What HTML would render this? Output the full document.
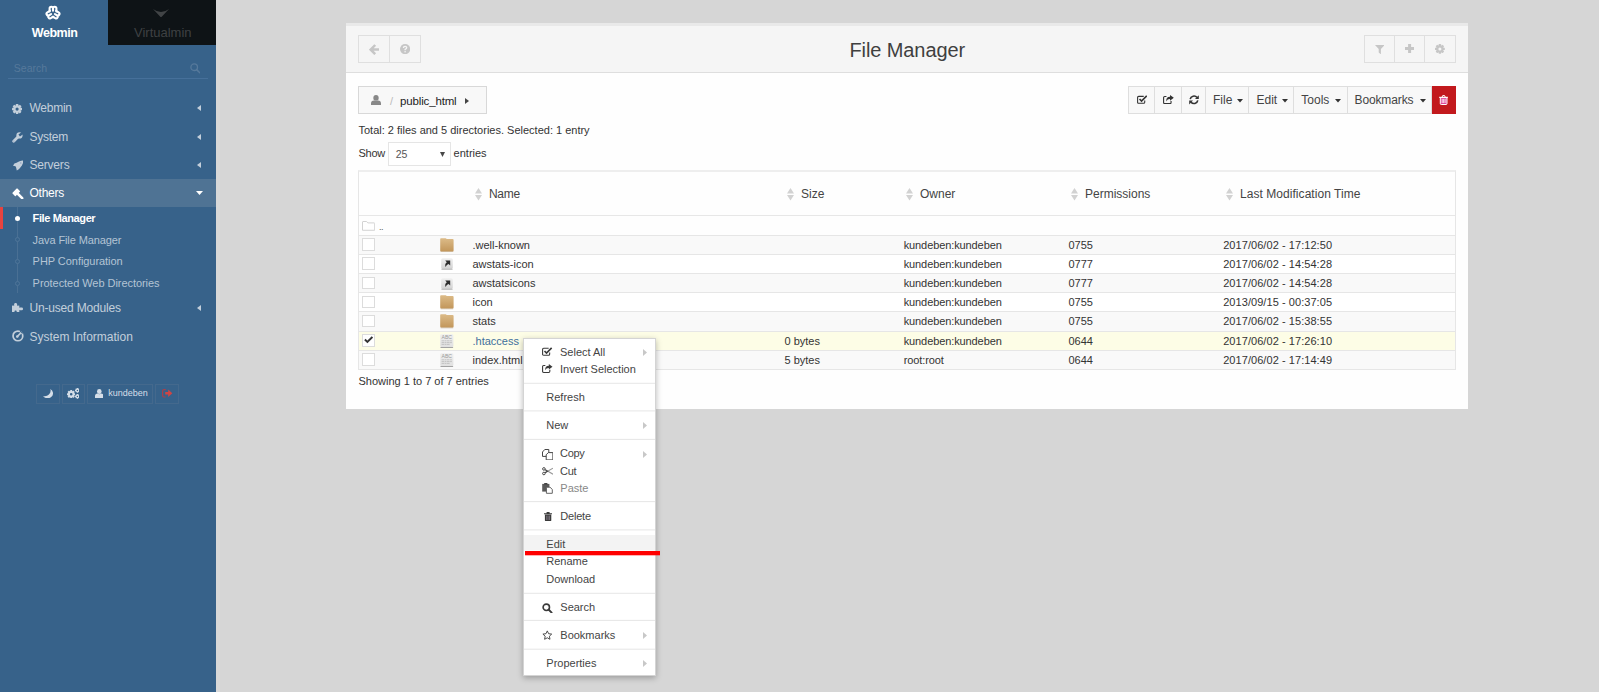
<!DOCTYPE html>
<html><head><meta charset="utf-8"><title>File Manager</title>
<style>
html,body{margin:0;padding:0;}
body{width:1599px;height:692px;overflow:hidden;background:#d6d6d6;font-family:"Liberation Sans", sans-serif;position:relative;}
.t{position:absolute;white-space:nowrap;}
.b{position:absolute;box-sizing:border-box;}
</style></head><body>
<div class="b" style="left:0px;top:0px;width:216px;height:692px;background:#37628a;"></div>
<div class="b" style="left:216px;top:0px;width:4px;height:692px;background:#d9d9d9;"></div>
<div class="b" style="left:108px;top:0px;width:108px;height:45px;background:#0e1316;"></div>
<span class="t" style="left:31.8px;top:27px;font-size:12.5px;line-height:12.5px;color:#fff;font-weight:700;letter-spacing:-0.45px;">Webmin</span>
<span class="t" style="left:134px;top:26px;font-size:13px;line-height:13px;color:#3e4143;">Virtualmin</span>
<span class="t" style="left:13.8px;top:63px;font-size:10.5px;line-height:10.5px;color:#56799b;">Search</span>
<div class="b" style="left:8px;top:78px;width:200px;height:1px;background:#46709a;"></div>
<div class="b" style="left:0px;top:179px;width:216px;height:28px;background:#4f7394;"></div>
<span class="t" style="left:29.5px;top:102px;font-size:12px;line-height:12px;color:#c3cfdb;letter-spacing:-0.25px;">Webmin</span>
<svg class="b" style="left:196.5px;top:105.4px;" width="4" height="6" viewBox="0 0 4 6"><path d="M4 0 L0 3 L4 6Z" fill="#c3cfdb"/></svg>
<span class="t" style="left:29.5px;top:131px;font-size:12px;line-height:12px;color:#c3cfdb;letter-spacing:-0.25px;">System</span>
<svg class="b" style="left:196.5px;top:134.4px;" width="4" height="6" viewBox="0 0 4 6"><path d="M4 0 L0 3 L4 6Z" fill="#c3cfdb"/></svg>
<span class="t" style="left:29.5px;top:159px;font-size:12px;line-height:12px;color:#c3cfdb;letter-spacing:-0.2px;">Servers</span>
<svg class="b" style="left:196.5px;top:162.4px;" width="4" height="6" viewBox="0 0 4 6"><path d="M4 0 L0 3 L4 6Z" fill="#c3cfdb"/></svg>
<span class="t" style="left:29.5px;top:187px;font-size:12px;line-height:12px;color:#fff;letter-spacing:-0.25px;">Others</span>
<svg class="b" style="left:195.5px;top:191px;" width="7" height="4" viewBox="0 0 7 4"><path d="M0 0 L7 0 L3.5 4Z" fill="#fff"/></svg>
<span class="t" style="left:29.5px;top:302px;font-size:12px;line-height:12px;color:#c3cfdb;letter-spacing:-0.18px;">Un-used Modules</span>
<svg class="b" style="left:196.5px;top:305.4px;" width="4" height="6" viewBox="0 0 4 6"><path d="M4 0 L0 3 L4 6Z" fill="#c3cfdb"/></svg>
<span class="t" style="left:29.5px;top:331px;font-size:12px;line-height:12px;color:#c3cfdb;">System Information</span>
<div class="b" style="left:17px;top:207px;width:1px;height:86px;background:#4a7094;"></div>
<div class="b" style="left:0px;top:207px;width:3px;height:22px;background:#e8433f;"></div>
<span class="t" style="left:32.6px;top:213px;font-size:11px;line-height:11px;color:#fff;font-weight:700;letter-spacing:-0.38px;">File Manager</span>
<span class="t" style="left:32.6px;top:235px;font-size:11px;line-height:11px;color:#b4c4d4;letter-spacing:-0.1px;">Java File Manager</span>
<span class="t" style="left:32.6px;top:256px;font-size:11px;line-height:11px;color:#b4c4d4;letter-spacing:-0.05px;">PHP Configuration</span>
<span class="t" style="left:32.6px;top:278px;font-size:11px;line-height:11px;color:#b4c4d4;letter-spacing:-0.05px;">Protected Web Directories</span>
<div class="b" style="left:14.8px;top:215.8px;width:5px;height:5px;background:#fff;border-radius:50%;"></div>
<div class="b" style="left:14.8px;top:237.2px;width:5px;height:5px;background:#37628a;border:1px solid #4f7599;border-radius:50%;"></div>
<div class="b" style="left:14.8px;top:258.8px;width:5px;height:5px;background:#37628a;border:1px solid #4f7599;border-radius:50%;"></div>
<div class="b" style="left:14.8px;top:280.5px;width:5px;height:5px;background:#37628a;border:1px solid #4f7599;border-radius:50%;"></div>
<div class="b" style="left:36px;top:384px;width:24px;height:19.5px;border:1px solid #44698d;"></div>
<div class="b" style="left:62px;top:384px;width:23px;height:19.5px;border:1px solid #44698d;"></div>
<div class="b" style="left:86.5px;top:384px;width:66.5px;height:19.5px;border:1px solid #44698d;"></div>
<div class="b" style="left:155px;top:384px;width:24px;height:19.5px;border:1px solid #44698d;"></div>
<span class="t" style="left:108.3px;top:389px;font-size:9px;line-height:9px;color:#d5dee8;">kundeben</span>
<div class="b" style="left:345.7px;top:22.8px;width:1122.5px;height:386.2px;background:#fefefe;"></div>
<div class="b" style="left:345.7px;top:22.8px;width:1122.5px;height:50.6px;background:#f5f5f5;border-bottom:1.5px solid #dedede;border-top:3.6px solid #e9e9e9;"></div>
<span class="t" style="left:849.5px;top:40px;font-size:20px;line-height:20px;color:#3f3f3f;letter-spacing:-0.1px;">File Manager</span>
<div class="b" style="left:358px;top:35px;width:63px;height:28px;background:#f5f5f5;border:1px solid #dfdfdf;"></div>
<div class="b" style="left:389px;top:35px;width:1px;height:28px;background:#dfdfdf;"></div>
<div class="b" style="left:1364px;top:35px;width:92px;height:28px;background:#f5f5f5;border:1px solid #dfdfdf;"></div>
<div class="b" style="left:1394px;top:35px;width:1px;height:28px;background:#dfdfdf;"></div>
<div class="b" style="left:1424px;top:35px;width:1px;height:28px;background:#dfdfdf;"></div>
<div class="b" style="left:358px;top:86px;width:129px;height:28px;background:#f8f8f8;border:1px solid #d8d8d8;"></div>
<span class="t" style="left:390px;top:96px;font-size:11px;line-height:11px;color:#bbb;">/</span>
<span class="t" style="left:400px;top:96px;font-size:11.5px;line-height:11.5px;color:#222;letter-spacing:-0.15px;">public_html</span>
<svg class="b" style="left:465px;top:97.5px;" width="4" height="6" viewBox="0 0 4 6"><path d="M0 0 L4 3 L0 6Z" fill="#444"/></svg>
<div class="b" style="left:1128px;top:86px;width:304px;height:28px;background:#f8f8f8;border:1px solid #dedede;"></div>
<div class="b" style="left:1154px;top:86px;width:1px;height:28px;background:#dedede;"></div>
<div class="b" style="left:1181px;top:86px;width:1px;height:28px;background:#dedede;"></div>
<div class="b" style="left:1205px;top:86px;width:1px;height:28px;background:#dedede;"></div>
<div class="b" style="left:1248px;top:86px;width:1px;height:28px;background:#dedede;"></div>
<div class="b" style="left:1293px;top:86px;width:1px;height:28px;background:#dedede;"></div>
<div class="b" style="left:1347px;top:86px;width:1px;height:28px;background:#dedede;"></div>
<div class="b" style="left:1432px;top:86px;width:24px;height:28px;background:#c2191d;"></div>
<span class="t" style="left:1213px;top:94px;font-size:12px;line-height:12px;color:#444;">File</span>
<svg class="b" style="left:1237px;top:99px;" width="6" height="3.5" viewBox="0 0 6 3.5"><path d="M0 0 L6 0 L3 3.5Z" fill="#333"/></svg>
<span class="t" style="left:1256.5px;top:94px;font-size:12px;line-height:12px;color:#444;">Edit</span>
<svg class="b" style="left:1282px;top:99px;" width="6" height="3.5" viewBox="0 0 6 3.5"><path d="M0 0 L6 0 L3 3.5Z" fill="#333"/></svg>
<span class="t" style="left:1301.3px;top:94px;font-size:12px;line-height:12px;color:#444;">Tools</span>
<svg class="b" style="left:1335.3px;top:99px;" width="6" height="3.5" viewBox="0 0 6 3.5"><path d="M0 0 L6 0 L3 3.5Z" fill="#333"/></svg>
<span class="t" style="left:1354.5px;top:94px;font-size:12px;line-height:12px;color:#444;letter-spacing:-0.12px;">Bookmarks</span>
<svg class="b" style="left:1419.5px;top:99px;" width="6" height="3.5" viewBox="0 0 6 3.5"><path d="M0 0 L6 0 L3 3.5Z" fill="#333"/></svg>
<span class="t" style="left:358.5px;top:125px;font-size:11px;line-height:11px;color:#333;">Total: 2 files and 5 directories. Selected: 1 entry</span>
<span class="t" style="left:358.5px;top:148px;font-size:11px;line-height:11px;color:#333;letter-spacing:-0.25px;">Show</span>
<div class="b" style="left:388px;top:142.2px;width:62.6px;height:23.4px;background:#fff;border:1px solid #e5e5e5;"></div>
<span class="t" style="left:395.7px;top:149px;font-size:10.5px;line-height:10.5px;color:#555;">25</span>
<svg class="b" style="left:440px;top:151.5px;" width="5" height="5" viewBox="0 0 5 5"><path d="M0 0 L5 0 L2.5 5Z" fill="#484848"/></svg>
<span class="t" style="left:453.6px;top:148px;font-size:11px;line-height:11px;color:#333;">entries</span>
<div class="b" style="left:358px;top:169.6px;width:1098px;height:200px;border:1px solid #e6e6e6;border-top:2px solid #eeeeee;"></div>
<div class="b" style="left:359px;top:215.4px;width:1096px;height:1px;background:#e7e7e7;"></div>
<div class="b" style="left:359px;top:234.8px;width:1096px;height:19.099999999999994px;background:#f9f9f9;border-top:1px solid #e6e6e6;"></div>
<div class="b" style="left:359px;top:253.9px;width:1096px;height:19.200000000000017px;background:#ffffff;border-top:1px solid #e6e6e6;"></div>
<div class="b" style="left:359px;top:273.1px;width:1096px;height:19.19999999999999px;background:#f9f9f9;border-top:1px solid #e6e6e6;"></div>
<div class="b" style="left:359px;top:292.3px;width:1096px;height:19.0px;background:#ffffff;border-top:1px solid #e6e6e6;"></div>
<div class="b" style="left:359px;top:311.3px;width:1096px;height:19.30000000000001px;background:#f9f9f9;border-top:1px solid #e6e6e6;"></div>
<div class="b" style="left:359px;top:330.6px;width:1096px;height:19.0px;background:#fdfde6;border-top:1px solid #e6e6e6;"></div>
<div class="b" style="left:359px;top:349.6px;width:1096px;height:19.19999999999999px;background:#f9f9f9;border-top:1px solid #e6e6e6;"></div>
<svg class="b" style="left:475px;top:188px;" width="7" height="12.5" viewBox="0 0 7 12.5"><path d="M3.5 0 L7 5.5 L0 5.5Z M0 7 L7 7 L3.5 12.5Z" fill="#d2d2d2"/></svg>
<span class="t" style="left:489px;top:188px;font-size:12px;line-height:12px;color:#444;letter-spacing:-0.3px;">Name</span>
<svg class="b" style="left:787px;top:188px;" width="7" height="12.5" viewBox="0 0 7 12.5"><path d="M3.5 0 L7 5.5 L0 5.5Z M0 7 L7 7 L3.5 12.5Z" fill="#d2d2d2"/></svg>
<span class="t" style="left:801px;top:188px;font-size:12px;line-height:12px;color:#444;">Size</span>
<svg class="b" style="left:906px;top:188px;" width="7" height="12.5" viewBox="0 0 7 12.5"><path d="M3.5 0 L7 5.5 L0 5.5Z M0 7 L7 7 L3.5 12.5Z" fill="#d2d2d2"/></svg>
<span class="t" style="left:920px;top:188px;font-size:12px;line-height:12px;color:#444;">Owner</span>
<svg class="b" style="left:1071px;top:188px;" width="7" height="12.5" viewBox="0 0 7 12.5"><path d="M3.5 0 L7 5.5 L0 5.5Z M0 7 L7 7 L3.5 12.5Z" fill="#d2d2d2"/></svg>
<span class="t" style="left:1085px;top:188px;font-size:12px;line-height:12px;color:#444;">Permissions</span>
<svg class="b" style="left:1226px;top:188px;" width="7" height="12.5" viewBox="0 0 7 12.5"><path d="M3.5 0 L7 5.5 L0 5.5Z M0 7 L7 7 L3.5 12.5Z" fill="#d2d2d2"/></svg>
<span class="t" style="left:1240px;top:188px;font-size:12px;line-height:12px;color:#444;letter-spacing:0.05px;">Last Modification Time</span>
<span class="t" style="left:379px;top:223px;font-size:9px;line-height:9px;color:#555;letter-spacing:-0.4px;">..</span>
<span class="t" style="left:472.5px;top:240px;font-size:11px;line-height:11px;color:#333;">.well-known</span>
<span class="t" style="left:903.7px;top:240px;font-size:11px;line-height:11px;color:#333;letter-spacing:-0.1px;">kundeben:kundeben</span>
<span class="t" style="left:1068.5px;top:240px;font-size:11px;line-height:11px;color:#333;">0755</span>
<span class="t" style="left:1223.2px;top:240px;font-size:11px;line-height:11px;color:#333;letter-spacing:0.06px;">2017/06/02 - 17:12:50</span>
<div class="b" style="left:362px;top:238.3px;width:12.6px;height:12.7px;background:#fff;border:1px solid #dcdcdc;"></div>
<span class="t" style="left:472.5px;top:259px;font-size:11px;line-height:11px;color:#333;">awstats-icon</span>
<span class="t" style="left:903.7px;top:259px;font-size:11px;line-height:11px;color:#333;letter-spacing:-0.1px;">kundeben:kundeben</span>
<span class="t" style="left:1068.5px;top:259px;font-size:11px;line-height:11px;color:#333;">0777</span>
<span class="t" style="left:1223.2px;top:259px;font-size:11px;line-height:11px;color:#333;letter-spacing:0.06px;">2017/06/02 - 14:54:28</span>
<div class="b" style="left:362px;top:257.4px;width:12.6px;height:12.7px;background:#fff;border:1px solid #dcdcdc;"></div>
<span class="t" style="left:472.5px;top:278px;font-size:11px;line-height:11px;color:#333;">awstatsicons</span>
<span class="t" style="left:903.7px;top:278px;font-size:11px;line-height:11px;color:#333;letter-spacing:-0.1px;">kundeben:kundeben</span>
<span class="t" style="left:1068.5px;top:278px;font-size:11px;line-height:11px;color:#333;">0777</span>
<span class="t" style="left:1223.2px;top:278px;font-size:11px;line-height:11px;color:#333;letter-spacing:0.06px;">2017/06/02 - 14:54:28</span>
<div class="b" style="left:362px;top:276.6px;width:12.6px;height:12.7px;background:#fff;border:1px solid #dcdcdc;"></div>
<span class="t" style="left:472.5px;top:297px;font-size:11px;line-height:11px;color:#333;">icon</span>
<span class="t" style="left:903.7px;top:297px;font-size:11px;line-height:11px;color:#333;letter-spacing:-0.1px;">kundeben:kundeben</span>
<span class="t" style="left:1068.5px;top:297px;font-size:11px;line-height:11px;color:#333;">0755</span>
<span class="t" style="left:1223.2px;top:297px;font-size:11px;line-height:11px;color:#333;letter-spacing:0.06px;">2013/09/15 - 00:37:05</span>
<div class="b" style="left:362px;top:295.8px;width:12.6px;height:12.7px;background:#fff;border:1px solid #dcdcdc;"></div>
<span class="t" style="left:472.5px;top:316px;font-size:11px;line-height:11px;color:#333;">stats</span>
<span class="t" style="left:903.7px;top:316px;font-size:11px;line-height:11px;color:#333;letter-spacing:-0.1px;">kundeben:kundeben</span>
<span class="t" style="left:1068.5px;top:316px;font-size:11px;line-height:11px;color:#333;">0755</span>
<span class="t" style="left:1223.2px;top:316px;font-size:11px;line-height:11px;color:#333;letter-spacing:0.06px;">2017/06/02 - 15:38:55</span>
<div class="b" style="left:362px;top:314.8px;width:12.6px;height:12.7px;background:#fff;border:1px solid #dcdcdc;"></div>
<span class="t" style="left:472.5px;top:336px;font-size:11px;line-height:11px;color:#3d6f9c;">.htaccess</span>
<span class="t" style="left:784.5px;top:336px;font-size:11px;line-height:11px;color:#333;">0 bytes</span>
<span class="t" style="left:903.7px;top:336px;font-size:11px;line-height:11px;color:#333;letter-spacing:-0.1px;">kundeben:kundeben</span>
<span class="t" style="left:1068.5px;top:336px;font-size:11px;line-height:11px;color:#333;">0644</span>
<span class="t" style="left:1223.2px;top:336px;font-size:11px;line-height:11px;color:#333;letter-spacing:0.06px;">2017/06/02 - 17:26:10</span>
<div class="b" style="left:362px;top:334.1px;width:12.6px;height:12.7px;background:#fff;border:1px solid #dcdcdc;"></div>
<span class="t" style="left:472.5px;top:355px;font-size:11px;line-height:11px;color:#333;">index.html</span>
<span class="t" style="left:784.5px;top:355px;font-size:11px;line-height:11px;color:#333;">5 bytes</span>
<span class="t" style="left:903.7px;top:355px;font-size:11px;line-height:11px;color:#333;letter-spacing:-0.1px;">root:root</span>
<span class="t" style="left:1068.5px;top:355px;font-size:11px;line-height:11px;color:#333;">0644</span>
<span class="t" style="left:1223.2px;top:355px;font-size:11px;line-height:11px;color:#333;letter-spacing:0.06px;">2017/06/02 - 17:14:49</span>
<div class="b" style="left:362px;top:353.1px;width:12.6px;height:12.7px;background:#fff;border:1px solid #dcdcdc;"></div>
<span class="t" style="left:358.5px;top:376px;font-size:11px;line-height:11px;color:#333;">Showing 1 to 7 of 7 entries</span>
<div class="b" style="left:523px;top:338px;width:133px;height:338px;background:#fff;border:1px solid #d4d4d4;box-shadow:0 2px 6px rgba(0,0,0,0.28);"></div>
<div class="b" style="left:524px;top:382px;width:131px;height:1px;background:rgba(0,0,0,0.020);"></div>
<div class="b" style="left:524px;top:383px;width:131px;height:1px;background:rgba(0,0,0,0.080);"></div>
<div class="b" style="left:524px;top:410px;width:131px;height:1px;background:rgba(0,0,0,0.060);"></div>
<div class="b" style="left:524px;top:411px;width:131px;height:1px;background:rgba(0,0,0,0.040);"></div>
<div class="b" style="left:524px;top:438px;width:131px;height:1px;background:rgba(0,0,0,0.010);"></div>
<div class="b" style="left:524px;top:439px;width:131px;height:1px;background:rgba(0,0,0,0.090);"></div>
<div class="b" style="left:524px;top:501px;width:131px;height:1px;background:rgba(0,0,0,0.090);"></div>
<div class="b" style="left:524px;top:502px;width:131px;height:1px;background:rgba(0,0,0,0.010);"></div>
<div class="b" style="left:524px;top:529px;width:131px;height:1px;background:rgba(0,0,0,0.060);"></div>
<div class="b" style="left:524px;top:530px;width:131px;height:1px;background:rgba(0,0,0,0.040);"></div>
<div class="b" style="left:524px;top:592px;width:131px;height:1px;background:rgba(0,0,0,0.020);"></div>
<div class="b" style="left:524px;top:593px;width:131px;height:1px;background:rgba(0,0,0,0.080);"></div>
<div class="b" style="left:524px;top:619px;width:131px;height:1px;background:rgba(0,0,0,0.010);"></div>
<div class="b" style="left:524px;top:620px;width:131px;height:1px;background:rgba(0,0,0,0.090);"></div>
<div class="b" style="left:524px;top:648px;width:131px;height:1px;background:rgba(0,0,0,0.030);"></div>
<div class="b" style="left:524px;top:649px;width:131px;height:1px;background:rgba(0,0,0,0.070);"></div>
<div class="b" style="left:524px;top:535px;width:131px;height:15px;background:#f3f3f3;"></div>
<div class="b" style="left:524px;top:550px;width:131px;height:1px;background:#f9f9f9;"></div>
<span class="t" style="left:560px;top:347px;font-size:11px;line-height:11px;color:#444;">Select All</span>
<span class="t" style="left:560px;top:364px;font-size:11px;line-height:11px;color:#444;">Invert Selection</span>
<span class="t" style="left:546.3px;top:392px;font-size:11px;line-height:11px;color:#444;">Refresh</span>
<span class="t" style="left:546.3px;top:420px;font-size:11px;line-height:11px;color:#444;">New</span>
<span class="t" style="left:560px;top:448px;font-size:11px;line-height:11px;color:#444;letter-spacing:-0.3px;">Copy</span>
<span class="t" style="left:560px;top:466px;font-size:11px;line-height:11px;color:#444;letter-spacing:-0.3px;">Cut</span>
<span class="t" style="left:560.3px;top:483px;font-size:11px;line-height:11px;color:#888;">Paste</span>
<span class="t" style="left:560.3px;top:511px;font-size:11px;line-height:11px;color:#444;letter-spacing:-0.2px;">Delete</span>
<span class="t" style="left:546.3px;top:539px;font-size:11px;line-height:11px;color:#444;">Edit</span>
<span class="t" style="left:546.3px;top:556px;font-size:11px;line-height:11px;color:#444;">Rename</span>
<span class="t" style="left:546.3px;top:574px;font-size:11px;line-height:11px;color:#444;">Download</span>
<span class="t" style="left:560.3px;top:602px;font-size:11px;line-height:11px;color:#444;">Search</span>
<span class="t" style="left:560.3px;top:630px;font-size:11px;line-height:11px;color:#444;">Bookmarks</span>
<span class="t" style="left:546.3px;top:658px;font-size:11px;line-height:11px;color:#444;">Properties</span>
<svg class="b" style="left:643px;top:349.0px;" width="4" height="7" viewBox="0 0 4 7"><path d="M0 0 L4 3.5 L0 7Z" fill="#c8c8c8"/></svg>
<svg class="b" style="left:643px;top:422.3px;" width="4" height="7" viewBox="0 0 4 7"><path d="M0 0 L4 3.5 L0 7Z" fill="#c8c8c8"/></svg>
<svg class="b" style="left:643px;top:450.7px;" width="4" height="7" viewBox="0 0 4 7"><path d="M0 0 L4 3.5 L0 7Z" fill="#c8c8c8"/></svg>
<svg class="b" style="left:643px;top:632.2px;" width="4" height="7" viewBox="0 0 4 7"><path d="M0 0 L4 3.5 L0 7Z" fill="#c8c8c8"/></svg>
<svg class="b" style="left:643px;top:659.9px;" width="4" height="7" viewBox="0 0 4 7"><path d="M0 0 L4 3.5 L0 7Z" fill="#c8c8c8"/></svg>
<div class="b" style="left:525px;top:551px;width:134.5px;height:4px;background:#ff0000;"></div>
<div class="b" style="left:525px;top:555px;width:134.5px;height:1px;background:rgba(255,0,0,0.3);"></div>
<svg class="b" style="left:43px;top:2.5px;" width="20" height="20" viewBox="-10 -10 20 20"><g stroke="#fff" stroke-width="2.1" fill="none" stroke-linecap="round"><path transform="rotate(0)" d="M-3.4 -1.6 V-4.5 A1.7 1.7 0 0 1 0 -4.5 V-2.2 M0 -4.5 A1.7 1.7 0 0 1 3.4 -4.5 V-1.6" /><path transform="rotate(120)" d="M-3.4 -1.6 V-4.5 A1.7 1.7 0 0 1 0 -4.5 V-2.2 M0 -4.5 A1.7 1.7 0 0 1 3.4 -4.5 V-1.6" /><path transform="rotate(240)" d="M-3.4 -1.6 V-4.5 A1.7 1.7 0 0 1 0 -4.5 V-2.2 M0 -4.5 A1.7 1.7 0 0 1 3.4 -4.5 V-1.6" /></g></svg>
<svg class="b" style="left:153px;top:8.5px;" width="16" height="8.5" viewBox="0 0 16 8.5"><path d="M0 0 Q8 6 16 0 L8 8.5Z" fill="#414446"/></svg>
<svg class="b" style="left:189.5px;top:63px;" width="10.5" height="10.5" viewBox="0 0 10.5 10.5"><circle cx="4.2" cy="4.2" r="3.3" fill="none" stroke="#56799b" stroke-width="1.3"/><path d="M6.6 6.6 L9.8 9.8" stroke="#56799b" stroke-width="1.5" stroke-linecap="round"/></svg>
<svg class="b" style="left:12.1px;top:103.5px;" width="10.2" height="10.2" viewBox="0 0 20 20"><g fill="#c3cfdb"><rect x="7.6" y="0" width="4.8" height="5" rx="0.8" transform="rotate(0 10 10)"/><rect x="7.6" y="0" width="4.8" height="5" rx="0.8" transform="rotate(45 10 10)"/><rect x="7.6" y="0" width="4.8" height="5" rx="0.8" transform="rotate(90 10 10)"/><rect x="7.6" y="0" width="4.8" height="5" rx="0.8" transform="rotate(135 10 10)"/><rect x="7.6" y="0" width="4.8" height="5" rx="0.8" transform="rotate(180 10 10)"/><rect x="7.6" y="0" width="4.8" height="5" rx="0.8" transform="rotate(225 10 10)"/><rect x="7.6" y="0" width="4.8" height="5" rx="0.8" transform="rotate(270 10 10)"/><rect x="7.6" y="0" width="4.8" height="5" rx="0.8" transform="rotate(315 10 10)"/></g><circle cx="10" cy="10" r="5.3" fill="none" stroke="#c3cfdb" stroke-width="4.4"/></svg>
<svg class="b" style="left:12.2px;top:131.8px;" width="11" height="10.8" viewBox="0 0 11 10.8"><path d="M1.7 9.2 L6.6 4.3" stroke="#c3cfdb" stroke-width="2.8" stroke-linecap="round"/><circle cx="7.5" cy="3.4" r="3.1" fill="#c3cfdb"/><rect x="0" y="-1.25" width="5" height="2.5" transform="translate(7.2 3.6) rotate(-38)" fill="#37628a"/><circle cx="1.9" cy="9" r="0.6" fill="#7f97b4"/></svg>
<svg class="b" style="left:12.5px;top:160.2px;" width="10.8" height="10.6" viewBox="0 0 10.8 10.6"><path d="M10.5 0.4 C8 0.5 5.5 1.3 3.6 2.7 L1.4 3.6 L0 5.7 L2.5 6.2 L3.1 7.6 L3.8 10.4 L5.8 9.2 L7 7.9 C8.9 6 10.3 3.5 10.5 0.4Z" fill="#c3cfdb"/><circle cx="7.8" cy="3" r="0.7" fill="#8d9fc0"/></svg>
<svg class="b" style="left:12.3px;top:187.8px;" width="11.6" height="11.4" viewBox="0 0 11.6 11.4"><rect x="0.7" y="2" width="7" height="4.6" rx="0.6" transform="rotate(-45 4.2 4.3)" fill="#fff"/><path d="M6 6 L10.2 10.2" stroke="#fff" stroke-width="2.5" stroke-linecap="round"/></svg>
<svg class="b" style="left:12.2px;top:302.8px;" width="11" height="9.6" viewBox="0 0 11 9.6"><g fill="#c3cfdb"><rect x="0" y="2.6" width="7.3" height="7"/><rect x="2.2" y="0" width="2.8" height="3.4" rx="1.2"/><rect x="6.8" y="4.6" width="4.2" height="2.6" rx="1.2"/></g><rect x="2.5" y="7.4" width="2.2" height="2.3" rx="0.9" fill="#37628a"/></svg>
<svg class="b" style="left:12.2px;top:330px;" width="12" height="12" viewBox="0 0 12 12"><circle cx="5.9" cy="5.9" r="4.85" fill="none" stroke="#c3cfdb" stroke-width="1.7"/><path d="M5.2 6.6 L9.4 2.4" stroke="#c3cfdb" stroke-width="1.5" stroke-linecap="round"/><circle cx="5.3" cy="6.5" r="1.3" fill="#c3cfdb"/><path d="M8.2 1 L11 3.4" stroke="#37628a" stroke-width="1.2"/></svg>
<svg class="b" style="left:43.1px;top:388.8px;" width="10.1" height="9.4" viewBox="0 0 10.1 10.2" preserveAspectRatio="none"><path d="M7.3 0 A5.4 5.4 0 1 1 0 7.5 A5.9 5.9 0 0 0 7.3 0Z" fill="#d5dee8"/></svg>
<svg class="b" style="left:67px;top:389.5px;" width="8.4" height="8.4" viewBox="0 0 20 20"><g fill="#d5dee8"><rect x="7.6" y="0" width="4.8" height="5" rx="0.8" transform="rotate(0 10 10)"/><rect x="7.6" y="0" width="4.8" height="5" rx="0.8" transform="rotate(45 10 10)"/><rect x="7.6" y="0" width="4.8" height="5" rx="0.8" transform="rotate(90 10 10)"/><rect x="7.6" y="0" width="4.8" height="5" rx="0.8" transform="rotate(135 10 10)"/><rect x="7.6" y="0" width="4.8" height="5" rx="0.8" transform="rotate(180 10 10)"/><rect x="7.6" y="0" width="4.8" height="5" rx="0.8" transform="rotate(225 10 10)"/><rect x="7.6" y="0" width="4.8" height="5" rx="0.8" transform="rotate(270 10 10)"/><rect x="7.6" y="0" width="4.8" height="5" rx="0.8" transform="rotate(315 10 10)"/></g><circle cx="10" cy="10" r="5.3" fill="none" stroke="#d5dee8" stroke-width="4.4"/></svg>
<svg class="b" style="left:74.6px;top:387.8px;" width="4.8" height="4.8" viewBox="0 0 20 20"><g fill="#d5dee8"><rect x="7.6" y="0" width="4.8" height="5" rx="0.8" transform="rotate(0 10 10)"/><rect x="7.6" y="0" width="4.8" height="5" rx="0.8" transform="rotate(45 10 10)"/><rect x="7.6" y="0" width="4.8" height="5" rx="0.8" transform="rotate(90 10 10)"/><rect x="7.6" y="0" width="4.8" height="5" rx="0.8" transform="rotate(135 10 10)"/><rect x="7.6" y="0" width="4.8" height="5" rx="0.8" transform="rotate(180 10 10)"/><rect x="7.6" y="0" width="4.8" height="5" rx="0.8" transform="rotate(225 10 10)"/><rect x="7.6" y="0" width="4.8" height="5" rx="0.8" transform="rotate(270 10 10)"/><rect x="7.6" y="0" width="4.8" height="5" rx="0.8" transform="rotate(315 10 10)"/></g><circle cx="10" cy="10" r="5.3" fill="none" stroke="#d5dee8" stroke-width="4.4"/></svg>
<svg class="b" style="left:74.6px;top:394px;" width="4.8" height="4.8" viewBox="0 0 20 20"><g fill="#d5dee8"><rect x="7.6" y="0" width="4.8" height="5" rx="0.8" transform="rotate(0 10 10)"/><rect x="7.6" y="0" width="4.8" height="5" rx="0.8" transform="rotate(45 10 10)"/><rect x="7.6" y="0" width="4.8" height="5" rx="0.8" transform="rotate(90 10 10)"/><rect x="7.6" y="0" width="4.8" height="5" rx="0.8" transform="rotate(135 10 10)"/><rect x="7.6" y="0" width="4.8" height="5" rx="0.8" transform="rotate(180 10 10)"/><rect x="7.6" y="0" width="4.8" height="5" rx="0.8" transform="rotate(225 10 10)"/><rect x="7.6" y="0" width="4.8" height="5" rx="0.8" transform="rotate(270 10 10)"/><rect x="7.6" y="0" width="4.8" height="5" rx="0.8" transform="rotate(315 10 10)"/></g><circle cx="10" cy="10" r="5.3" fill="none" stroke="#d5dee8" stroke-width="4.4"/></svg>
<svg class="b" style="left:94.8px;top:388.5px;" width="8.6" height="9.6" viewBox="0 0 8.6 9.6"><g fill="#d5dee8"><ellipse cx="4.3" cy="2.5" rx="2.3" ry="2.5"/><path d="M0 9.6 V7.2 Q0 4.6 2.6 4.6 Q4.3 5.8 6 4.6 Q8.6 4.6 8.6 7.2 V9.6Z"/></g></svg>
<svg class="b" style="left:162px;top:389px;" width="10.5" height="8.6" viewBox="0 0 10.5 8.6"><path d="M3.8 0.6 H2 Q0.6 0.6 0.6 2 V6.6 Q0.6 8 2 8 H3.8" fill="none" stroke="#a8404a" stroke-width="1.2"/><path d="M3.2 3 H6.2 V0.6 L10.3 4.3 L6.2 8 V5.6 H3.2Z" fill="#cf4544"/></svg>
<svg class="b" style="left:369px;top:43.8px;" width="10.2" height="11.2" viewBox="0 0 10.2 11.2"><path d="M3 5.6 H10.2 M6.2 1 L1.7 5.6 L6.2 10.2" fill="none" stroke="#c6c6c6" stroke-width="2.5" stroke-linejoin="miter"/></svg>
<svg class="b" style="left:399.7px;top:43.8px;" width="10.2" height="10.2" viewBox="0 0 10.2 10.2"><circle cx="5.1" cy="5.1" r="5.1" fill="#c6c6c6"/><path d="M3.5 4 Q3.5 2.4 5.1 2.4 Q6.7 2.4 6.7 3.8 Q6.7 4.7 5.1 5.4 V6.2" stroke="#f5f5f5" stroke-width="1.3" fill="none"/><circle cx="5.1" cy="7.8" r="0.8" fill="#f5f5f5"/></svg>
<svg class="b" style="left:1374.8px;top:44.8px;" width="9.6" height="9.4" viewBox="0 0 9.6 9.4"><path d="M0 0 H9.6 L5.9 4.1 V9.4 L3.7 7.6 V4.1Z" fill="#c6c6c6"/></svg>
<svg class="b" style="left:1405px;top:44.2px;" width="9.2" height="9" viewBox="0 0 9.2 9"><path d="M3.1 0 H6.1 V3 H9.2 V6 H6.1 V9 H3.1 V6 H0 V3 H3.1Z" fill="#c6c6c6"/></svg>
<svg class="b" style="left:1435px;top:44.2px;" width="9.8" height="9.8" viewBox="0 0 20 20"><g fill="#c6c6c6"><rect x="7.6" y="0" width="4.8" height="5" rx="0.8" transform="rotate(0 10 10)"/><rect x="7.6" y="0" width="4.8" height="5" rx="0.8" transform="rotate(45 10 10)"/><rect x="7.6" y="0" width="4.8" height="5" rx="0.8" transform="rotate(90 10 10)"/><rect x="7.6" y="0" width="4.8" height="5" rx="0.8" transform="rotate(135 10 10)"/><rect x="7.6" y="0" width="4.8" height="5" rx="0.8" transform="rotate(180 10 10)"/><rect x="7.6" y="0" width="4.8" height="5" rx="0.8" transform="rotate(225 10 10)"/><rect x="7.6" y="0" width="4.8" height="5" rx="0.8" transform="rotate(270 10 10)"/><rect x="7.6" y="0" width="4.8" height="5" rx="0.8" transform="rotate(315 10 10)"/></g><circle cx="10" cy="10" r="5.3" fill="none" stroke="#c6c6c6" stroke-width="4.4"/></svg>
<svg class="b" style="left:371px;top:94.6px;" width="10" height="10.8" viewBox="0 0 10 10.8"><g fill="#888"><ellipse cx="5" cy="2.9" rx="2.7" ry="2.9"/><path d="M0 10.8 V8.4 Q0 5.4 3 5.4 Q5 6.8 7 5.4 Q10 5.4 10 8.4 V10.8Z"/></g></svg>
<svg class="b" style="left:1136.8px;top:95.1px;" width="10.6" height="8.904" viewBox="0 0 12.6 10.6"><path d="M9.2 6.6 V8.6 Q9.2 9.9 7.9 9.9 H2 Q0.7 9.9 0.7 8.6 V2.9 Q0.7 1.6 2 1.6 H8" fill="none" stroke="#333" stroke-width="1.3"/><path d="M3 4.8 L5.4 7.2 L11.6 1" fill="none" stroke="#333" stroke-width="2"/></svg>
<svg class="b" style="left:1163px;top:94.8px;" width="10.8" height="9.288" viewBox="0 0 12.6 10.8"><path d="M9.4 7 V8.8 Q9.4 10.1 8.1 10.1 H2 Q0.7 10.1 0.7 8.8 V3.1 Q0.7 1.8 2 1.8 H4" fill="none" stroke="#333" stroke-width="1.3"/><path d="M8.2 0 L12.6 3.3 L8.2 6.6 V4.7 Q5 4.6 3.9 7.6 Q3.2 2.1 8.2 2Z" fill="#333"/></svg>
<svg class="b" style="left:1189.2px;top:95.4px;" width="10" height="9.6" viewBox="0 0 10 9.6"><path d="M1.2 4.2 A3.8 3.8 0 0 1 8 2.6" fill="none" stroke="#333" stroke-width="1.6"/><path d="M9.8 0.2 V4 H6Z" fill="#333"/><path d="M8.8 5.4 A3.8 3.8 0 0 1 2 7" fill="none" stroke="#333" stroke-width="1.6"/><path d="M0.2 9.4 V5.6 H4Z" fill="#333"/></svg>
<svg class="b" style="left:1438.9px;top:95px;" width="9.3" height="10" viewBox="0 0 9.3 10"><path d="M1.3 2.6 V8.6 Q1.3 9.5 2.2 9.5 H7.1 Q8 9.5 8 8.6 V2.6Z" fill="#e0489a" stroke="#fff" stroke-width="1"/><path d="M0 2.3 H9.3 M3.1 2 L3.7 0.6 H5.6 L6.2 2" fill="none" stroke="#fff" stroke-width="1"/><path d="M3.2 4 V8 M4.65 4 V8 M6.1 4 V8" stroke="#fff" stroke-width="0.8"/></svg>
<svg class="b" style="left:362.2px;top:221px;" width="13.2" height="10" viewBox="0 0 13.2 10"><path d="M0.5 9.3 V1 Q0.5 0.5 1 0.5 H4.6 L5.8 1.9 H12.2 Q12.7 1.9 12.7 2.4 V9.3Z" fill="#fff" stroke="#d3d3d3" stroke-width="1"/></svg>
<svg class="b" style="left:440.3px;top:237.8px;" width="13.8" height="14.4" viewBox="0 0 13.8 14.4"><defs><linearGradient id="fg" x1="0" y1="0" x2="0" y2="1"><stop offset="0" stop-color="#dcbb88"/><stop offset="1" stop-color="#c2965a"/></linearGradient></defs><path d="M1 0.2 H5.6 Q6.4 0.2 6.6 1 H12.6 Q13.6 1 13.6 2 V12.6 Q13.6 13.6 12.6 13.6 H1.2 Q0.2 13.6 0.2 12.6 V1 Q0.2 0.2 1 0.2Z" fill="url(#fg)"/><rect x="0.4" y="13.4" width="13" height="0.8" rx="0.4" fill="#a98657" opacity="0.55"/></svg>
<svg class="b" style="left:441.2px;top:258.3px;" width="12" height="12" viewBox="0 0 12 12"><defs><linearGradient id="lg" x1="0" y1="0" x2="0" y2="1"><stop offset="0" stop-color="#f0f0f0"/><stop offset="1" stop-color="#d2d2d2"/></linearGradient></defs><rect x="0.2" y="0.2" width="11.6" height="11" rx="1.6" fill="url(#lg)"/><rect x="0.4" y="10.8" width="11.2" height="1" rx="0.5" fill="#b5b5b5"/><path d="M4.2 2.6 H9.2 V7.6 L7.6 6 Q5.6 6.6 4.6 9 Q3.4 6 5.8 4.2Z" fill="#2d2d2d"/></svg>
<svg class="b" style="left:441.2px;top:277.5px;" width="12" height="12" viewBox="0 0 12 12"><defs><linearGradient id="lg" x1="0" y1="0" x2="0" y2="1"><stop offset="0" stop-color="#f0f0f0"/><stop offset="1" stop-color="#d2d2d2"/></linearGradient></defs><rect x="0.2" y="0.2" width="11.6" height="11" rx="1.6" fill="url(#lg)"/><rect x="0.4" y="10.8" width="11.2" height="1" rx="0.5" fill="#b5b5b5"/><path d="M4.2 2.6 H9.2 V7.6 L7.6 6 Q5.6 6.6 4.6 9 Q3.4 6 5.8 4.2Z" fill="#2d2d2d"/></svg>
<svg class="b" style="left:440.3px;top:295.3px;" width="13.8" height="14.4" viewBox="0 0 13.8 14.4"><defs><linearGradient id="fg" x1="0" y1="0" x2="0" y2="1"><stop offset="0" stop-color="#dcbb88"/><stop offset="1" stop-color="#c2965a"/></linearGradient></defs><path d="M1 0.2 H5.6 Q6.4 0.2 6.6 1 H12.6 Q13.6 1 13.6 2 V12.6 Q13.6 13.6 12.6 13.6 H1.2 Q0.2 13.6 0.2 12.6 V1 Q0.2 0.2 1 0.2Z" fill="url(#fg)"/><rect x="0.4" y="13.4" width="13" height="0.8" rx="0.4" fill="#a98657" opacity="0.55"/></svg>
<svg class="b" style="left:440.3px;top:314.4px;" width="13.8" height="14.4" viewBox="0 0 13.8 14.4"><defs><linearGradient id="fg" x1="0" y1="0" x2="0" y2="1"><stop offset="0" stop-color="#dcbb88"/><stop offset="1" stop-color="#c2965a"/></linearGradient></defs><path d="M1 0.2 H5.6 Q6.4 0.2 6.6 1 H12.6 Q13.6 1 13.6 2 V12.6 Q13.6 13.6 12.6 13.6 H1.2 Q0.2 13.6 0.2 12.6 V1 Q0.2 0.2 1 0.2Z" fill="url(#fg)"/><rect x="0.4" y="13.4" width="13" height="0.8" rx="0.4" fill="#a98657" opacity="0.55"/></svg>
<svg class="b" style="left:440.4px;top:333.8px;" width="13.6" height="14.2" viewBox="0 0 13.6 14.2"><defs><linearGradient id="tg" x1="0" y1="0" x2="0" y2="1"><stop offset="0" stop-color="#efefef"/><stop offset="1" stop-color="#e0e0e0"/></linearGradient></defs><rect x="0.2" y="0.2" width="13.2" height="13" rx="1.4" fill="url(#tg)"/><rect x="0.4" y="12.9" width="12.8" height="1" rx="0.5" fill="#a3a3a3"/><text x="6.8" y="4.9" font-family="Liberation Sans" font-size="4.6" fill="#9a9a9a" text-anchor="middle" textLength="10.4" lengthAdjust="spacingAndGlyphs">ABC</text><g stroke="#b4b4b4" stroke-width="0.7" stroke-dasharray="2.6 0.5 1.8 0.5"><path d="M1.6 6.8 H12 M1.6 8.6 H12"/><path d="M1.6 10.4 H9.6"/></g></svg>
<svg class="b" style="left:440.4px;top:353px;" width="13.6" height="14.2" viewBox="0 0 13.6 14.2"><defs><linearGradient id="tg" x1="0" y1="0" x2="0" y2="1"><stop offset="0" stop-color="#efefef"/><stop offset="1" stop-color="#e0e0e0"/></linearGradient></defs><rect x="0.2" y="0.2" width="13.2" height="13" rx="1.4" fill="url(#tg)"/><rect x="0.4" y="12.9" width="12.8" height="1" rx="0.5" fill="#a3a3a3"/><text x="6.8" y="4.9" font-family="Liberation Sans" font-size="4.6" fill="#9a9a9a" text-anchor="middle" textLength="10.4" lengthAdjust="spacingAndGlyphs">ABC</text><g stroke="#b4b4b4" stroke-width="0.7" stroke-dasharray="2.6 0.5 1.8 0.5"><path d="M1.6 6.8 H12 M1.6 8.6 H12"/><path d="M1.6 10.4 H9.6"/></g></svg>
<svg class="b" style="left:364px;top:336.4px;" width="9.2" height="7.2" viewBox="0 0 9.2 7.2"><path d="M0.9 3.5 L3.4 6 L8.4 1" fill="none" stroke="#333" stroke-width="1.9"/></svg>
<svg class="b" style="left:542.2px;top:347px;" width="10.5" height="8.82" viewBox="0 0 12.6 10.6"><path d="M9.2 6.6 V8.6 Q9.2 9.9 7.9 9.9 H2 Q0.7 9.9 0.7 8.6 V2.9 Q0.7 1.6 2 1.6 H8" fill="none" stroke="#3a3a3a" stroke-width="1.3"/><path d="M3 4.8 L5.4 7.2 L11.6 1" fill="none" stroke="#3a3a3a" stroke-width="2"/></svg>
<svg class="b" style="left:542.2px;top:364px;" width="10.5" height="9.03" viewBox="0 0 12.6 10.8"><path d="M9.4 7 V8.8 Q9.4 10.1 8.1 10.1 H2 Q0.7 10.1 0.7 8.8 V3.1 Q0.7 1.8 2 1.8 H4" fill="none" stroke="#3a3a3a" stroke-width="1.3"/><path d="M8.2 0 L12.6 3.3 L8.2 6.6 V4.7 Q5 4.6 3.9 7.6 Q3.2 2.1 8.2 2Z" fill="#3a3a3a"/></svg>
<svg class="b" style="left:541.8px;top:448.8px;" width="11.4" height="11.4" viewBox="0 0 11.4 11.4"><g fill="#fff" stroke="#444" stroke-width="1"><path d="M0.5 3 L2.8 0.5 H6.8 V7.4 H0.5Z"/><path d="M4.2 5.8 L6.3 3.6 H10.9 V10.9 H4.2Z"/></g></svg>
<svg class="b" style="left:541.8px;top:467.2px;" width="11.4" height="8.4" viewBox="0 0 11.4 8.4"><g fill="none" stroke="#444" stroke-width="1"><circle cx="1.9" cy="1.9" r="1.3"/><circle cx="1.9" cy="6.5" r="1.3"/></g><path d="M3 2.6 L11 7.2 M3 5.8 L11 1.2" stroke="#999" stroke-width="1.1"/><path d="M3 2.6 L5.6 4.2 L3 5.8" stroke="#444" stroke-width="1.1" fill="none"/></svg>
<svg class="b" style="left:542px;top:482.8px;" width="10.8" height="10.8" viewBox="0 0 10.8 10.8"><path d="M0.2 0.9 H7.4 V8.6 H0.2Z" fill="#5a5a5a"/><rect x="2.2" y="0" width="3.2" height="1.6" fill="#444"/><path d="M4.4 4.2 H8 L10.3 6.4 V10.3 H4.4Z" fill="#fff" stroke="#555" stroke-width="0.9"/></svg>
<svg class="b" style="left:543.6px;top:512.2px;" width="8.2" height="9.2" viewBox="0 0 8.2 9.2"><path d="M0.9 2.4 H7.3 V8.2 Q7.3 9.1 6.4 9.1 H1.8 Q0.9 9.1 0.9 8.2Z" fill="#3a3a3a"/><path d="M0 1.2 H8.2 V2.2 H0Z M2.6 0 H5.6 V1.2 H2.6Z" fill="#3a3a3a"/><path d="M2.7 3.6 V8 M4.1 3.6 V8 M5.5 3.6 V8" stroke="#9a8fa0" stroke-width="0.6"/></svg>
<svg class="b" style="left:542.4px;top:603px;" width="10.4" height="10.4" viewBox="0 0 10.4 10.4"><circle cx="4.3" cy="4.3" r="3.2" fill="none" stroke="#3a3a3a" stroke-width="1.6"/><path d="M6.8 6.8 L9.6 9.6" stroke="#3a3a3a" stroke-width="1.9" stroke-linecap="round"/></svg>
<svg class="b" style="left:542.2px;top:630.2px;" width="10.6" height="10.2" viewBox="0 0 10.6 10.2"><path d="M5.3 0.9 L6.6 3.7 L9.7 4.1 L7.4 6.2 L8 9.3 L5.3 7.8 L2.6 9.3 L3.2 6.2 L0.9 4.1 L4 3.7Z" fill="none" stroke="#444" stroke-width="0.95" stroke-linejoin="round"/></svg>
</body></html>
